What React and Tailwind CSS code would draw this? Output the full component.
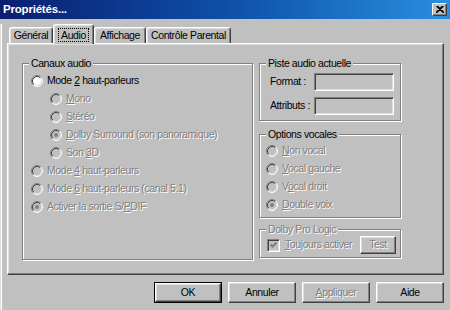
import React from 'react'

const dis = 'text-[#808080] [text-shadow:1px_1px_0_#fff]'

const Radio = ({ checked, disabled }) => (
  <svg width="12" height="12" viewBox="0 0 12 12" className="shrink-0">
    <circle cx="6" cy="6" r="4.5" fill={disabled ? '#c0c0c0' : '#fff'} />
    <path d="M2.11 9.89 A5.5 5.5 0 0 1 9.89 2.11" fill="none" stroke="#808080" />
    <path d="M9.89 2.11 A5.5 5.5 0 0 1 2.11 9.89" fill="none" stroke="#fff" />
    <path d="M2.82 9.18 A4.5 4.5 0 0 1 9.18 2.82" fill="none" stroke="#404040" />
    <path d="M9.18 2.82 A4.5 4.5 0 0 1 2.82 9.18" fill="none" stroke="#dfdfdf" />
    {checked && <circle cx="6" cy="6" r="2" fill={disabled ? '#808080' : '#000'} />}
  </svg>
)

const RadioRow = ({ checked, disabled, indent, children }) => (
  <div className={`flex items-center h-[18px] gap-[4px] ${indent ? 'pl-[19px]' : ''}`}>
    <Radio checked={checked} disabled={disabled} />
    <span className={disabled ? dis : ''}>{children}</span>
  </div>
)

const Group = ({ title, disabled, className, children }) => (
  <div className={`relative border border-[#808080] shadow-[1px_1px_0_#fff,inset_1px_1px_0_#fff] ${className}`}>
    <span className={`absolute -top-[7px] left-[6px] bg-[#c0c0c0] px-[2px] leading-[12px] ${disabled ? dis : ''}`}>
      {title}
    </span>
    {children}
  </div>
)

const Field = () => (
  <div className="w-[80px] h-[18px] border border-t-[#808080] border-l-[#808080] border-b-white border-r-white shadow-[inset_1px_1px_0_#404040,inset_-1px_-1px_0_#dfdfdf] bg-[#c0c0c0]" />
)

const Btn = ({ children, def, disabled, className }) => {
  const inner = (
    <div className="flex-1 flex items-center justify-center border border-t-white border-l-white border-b-[#404040] border-r-[#404040] shadow-[inset_-1px_-1px_0_#808080,inset_1px_1px_0_#dfdfdf]">
      <span className={disabled ? dis : ''}>{children}</span>
    </div>
  )
  return (
    <div className={`flex bg-[#c0c0c0] ${def ? 'border border-black' : ''} ${className}`}>{inner}</div>
  )
}

const Check = () => (
  <div className="w-[13px] h-[13px] shrink-0 flex items-center justify-center border border-t-[#808080] border-l-[#808080] border-b-white border-r-white shadow-[inset_1px_1px_0_#404040,inset_-1px_-1px_0_#dfdfdf] bg-[#c0c0c0]">
    <svg width="7" height="7" viewBox="0 0 7 7">
      <path d="M0.5 2.5 L2.5 4.5 L6.5 0.5" fill="none" stroke="#808080" strokeWidth="2" />
    </svg>
  </div>
)

const Tab = ({ children, active, className }) => (
  <div
    className={`flex items-center justify-center bg-[#c0c0c0] border-t border-l border-t-white border-l-white border-r border-r-[#404040] rounded-t-[3px] shadow-[inset_-1px_0_0_#808080,inset_1px_1px_0_#dfdfdf] ${
      active ? 'h-[20px] -mb-[1px] relative z-10' : 'h-[16px]'
    } ${className}`}
  >
    {children}
  </div>
)

export default function App() {
  return (
    <div className="w-[450px] h-[310px] overflow-hidden bg-[#c0c0c0] text-black text-[10.5px] tracking-[-0.4px] font-['Liberation_Sans',Arial,sans-serif]">
      {/* title bar */}
      <div className="h-[19px] flex items-center justify-between pl-[3px] pr-[3px] bg-gradient-to-r from-[#0a1d70] via-[#0f4fa8] to-[#2a8fe0]">
        <span className="text-white font-bold text-[11.5px] tracking-[-0.2px]">Propriétés...</span>
        <div className="w-[15px] h-[13px] flex items-center justify-center bg-[#c0c0c0] border border-t-white border-l-white border-b-[#404040] border-r-[#404040] shadow-[inset_-1px_-1px_0_#808080]">
          <svg width="8" height="7" viewBox="0 0 8 7">
            <path d="M0.5 0 L7.5 7 M7.5 0 L0.5 7 M1.5 0 L8 6.5 M6.5 0 L0 6.5" stroke="#000" strokeWidth="1.1" />
          </svg>
        </div>
      </div>

      <div className="h-[291px] shadow-[inset_1px_0_0_#dfdfdf,inset_2px_0_0_#fff]">
        {/* tabs */}
        <div className="flex items-end h-[19px] mt-[5px] ml-[9px]">
          <Tab className="w-[44px]">Général</Tab>
          <Tab active className="w-[41px]">
            <span className="outline-1 outline-dotted outline-black px-[2px] leading-[12px]">Audio</span>
          </Tab>
          <Tab className="w-[52px]">Affichage</Tab>
          <Tab className="w-[85px]">Contrôle Parental</Tab>
        </div>

        {/* panel */}
        <div className="ml-[7px] w-[437px] h-[232px] border border-t-white border-l-white border-b-[#404040] border-r-[#404040] shadow-[inset_-1px_-1px_0_#808080,inset_1px_1px_0_#dfdfdf] flex gap-[6px] pl-[14px] pt-[19px]">
          <Group title="Canaux audio" className="w-[231px] h-[197px] pt-[8px] pl-[8px]">
            <RadioRow>Mode <u>2</u> haut-parleurs</RadioRow>
            <RadioRow indent disabled><u>M</u>ono</RadioRow>
            <RadioRow indent disabled><u>S</u>téréo</RadioRow>
            <RadioRow indent disabled checked><u>D</u>olby Surround (son panoramique)</RadioRow>
            <RadioRow indent disabled>Son <u>3</u>D</RadioRow>
            <RadioRow disabled>Mode <u>4</u> haut-parleurs</RadioRow>
            <RadioRow disabled>Mode <u>6</u> haut-parleurs (canal 5.1)</RadioRow>
            <RadioRow disabled checked>Activer la sortie S/<u>P</u>DIF</RadioRow>
          </Group>

          <div className="w-[142px] flex flex-col">
            <Group title="Piste audio actuelle" className="h-[58px] pt-[9px] pl-[10px] flex flex-col gap-[6px]">
              <div className="flex items-center">
                <span className="w-[44px]">Format :</span>
                <Field />
              </div>
              <div className="flex items-center">
                <span className="w-[44px]">Attributs :</span>
                <Field />
              </div>
            </Group>

            <Group title="Options vocales" className="h-[84px] mt-[13px] pt-[7px] pl-[6px]">
              <RadioRow disabled><u>N</u>on vocal</RadioRow>
              <RadioRow disabled><u>V</u>ocal gauche</RadioRow>
              <RadioRow disabled>V<u>o</u>cal droit</RadioRow>
              <RadioRow disabled checked><u>D</u>ouble voix</RadioRow>
            </Group>

            <Group title="Dolby Pro Logic" disabled className="h-[29px] mt-[11px] pt-[6px] pl-[7px] pr-[4px]">
              <div className="flex items-center h-[18px]">
                <Check />
                <span className={`ml-[5px] ${dis}`}><u>T</u>oujours activer</span>
                <Btn disabled className="ml-auto w-[36px] h-[18px]">Test</Btn>
              </div>
            </Group>
          </div>
        </div>

        {/* bottom buttons */}
        <div className="flex justify-end gap-[6px] pr-[6px] mt-[7px]">
          <Btn def className="w-[68px] h-[21px]">OK</Btn>
          <Btn className="w-[68px] h-[21px]">Annuler</Btn>
          <Btn disabled className="w-[68px] h-[21px]"><u>A</u>ppliquer</Btn>
          <Btn className="w-[68px] h-[21px]">Aide</Btn>
        </div>
      </div>
    </div>
  )
}
